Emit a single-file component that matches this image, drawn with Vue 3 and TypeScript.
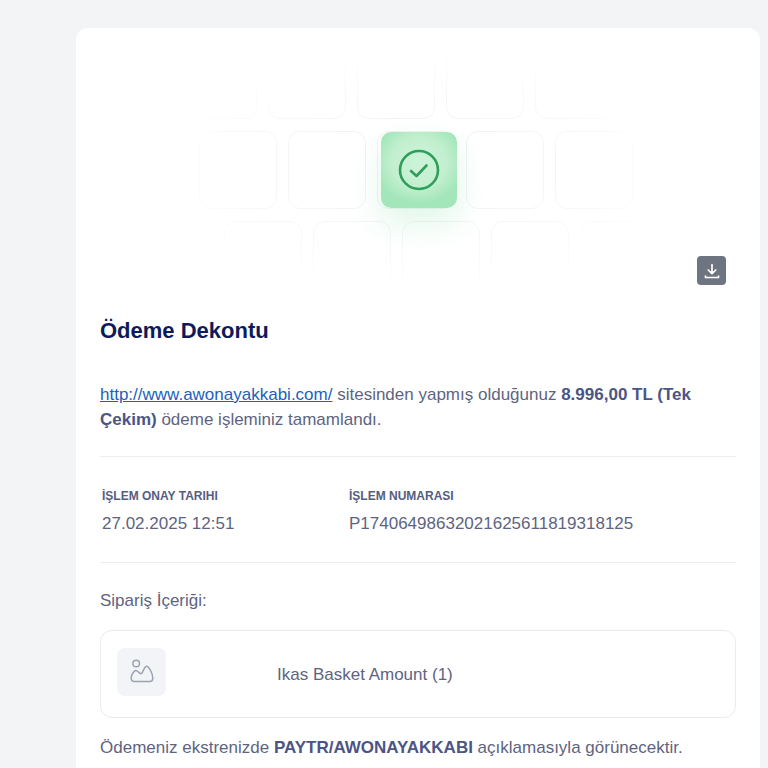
<script setup lang="ts">
interface GridRow { id: string; offset: number; cells: number[] }

const rows: GridRow[] = [
  { id: 'top', offset: 103, cells: [0, 1, 2, 3, 4] },
  { id: 'middle', offset: 123, cells: [0, 1, 2, 3, 4] },
  { id: 'bottom', offset: 148, cells: [0, 1, 2, 3, 4] },
]
</script>

<template>
  <main class="page">
    <section class="card">
      <div class="hero">
        <div class="tiles" aria-hidden="true">
          <div v-for="row in rows" :key="row.id" class="tile-row" :style="{ paddingLeft: row.offset + 'px' }">
            <span v-for="cell in row.cells" :key="cell" class="tile" />
          </div>
        </div>
        <div class="success">
          <svg width="44" height="44" viewBox="0 0 44 44" fill="none">
            <circle cx="22" cy="22" r="19" stroke="#2f9e5b" stroke-width="2.6" />
            <path d="M14 23l5.500 5 10-10.500" stroke="#2f9e5b" stroke-width="2.6" stroke-linecap="round" stroke-linejoin="round" />
          </svg>
        </div>
        <button class="download" type="button" aria-label="İndir">
          <svg width="18" height="18" viewBox="0 0 18 18" fill="none">
            <path d="M9 2.500v9M5.200 8 9 11.700 12.800 8M2.500 14v1.500h13V14" stroke="#fff" stroke-width="1.700" stroke-linecap="round" stroke-linejoin="round" />
          </svg>
        </button>
      </div>

      <h1 class="title">Ödeme Dekontu</h1>

      <p class="intro">
        <a href="#" class="link">http://www.awonayakkabi.com/</a> sitesinden yapmış olduğunuz
        <strong>8.996,00 TL (Tek Çekim)</strong> ödeme işleminiz tamamlandı.
      </p>

      <div class="meta">
        <div class="meta-item date">
          <div class="label">İşlem Onay Tarihi</div>
          <div class="value">27.02.2025 12:51</div>
        </div>
        <div class="meta-item">
          <div class="label">İşlem Numarası</div>
          <div class="value">P17406498632021625611819318125</div>
        </div>
      </div>

      <h2 class="section-title">Sipariş İçeriği:</h2>

      <div class="order">
        <div class="thumb">
          <svg width="26" height="26" viewBox="0 0 26 26" fill="none">
            <circle cx="7.200" cy="4.500" r="3.300" stroke="#9ca3af" stroke-width="1.500" />
            <path d="M2.200 19c0-2.500 2-6.500 4.300-7.500 2-.8 3.500 3.300 5.500 3.300 2 0 3-7.600 5.500-7.600 2.500 0 6.300 7.500 6.300 12 0 2-1.300 3.300-3 3.300H5c-1.700 0-2.800-1.500-2.800-3.500z" stroke="#9ca3af" stroke-width="1.500" stroke-linejoin="round" />
          </svg>
        </div>
        <span class="order-name">Ikas Basket Amount (1)</span>
      </div>

      <p class="note">
        Ödemeniz ekstrenizde <strong>PAYTR/AWONAYAKKABI</strong> açıklamasıyla görünecektir.
      </p>
    </section>
  </main>
</template>

<style>
html,
body {
  margin: 0;
  height: 768px;
  overflow: hidden;
  background: #f3f4f6;
}
</style>

<style scoped>
.page {
  padding: 28px 8px 0 76px;
  font-family: "Liberation Sans", Arial, sans-serif;
  color: #5e6480;
  font-size: 17px;
}

.card {
  background: #fff;
  border-radius: 12px 12px 0 0;
  padding: 0 24px 40px;
  min-height: 780px;
  box-sizing: border-box;
}

.hero {
  position: relative;
  height: 272px;
  margin: 0 -24px;
  overflow: hidden;
}

.tiles {
  position: absolute;
  inset: 0;
  display: flex;
  flex-direction: column;
  gap: 12px;
  padding-top: 13px;
  -webkit-mask-image: radial-gradient(ellipse 270px 125px at 343px 142px, #000 35%, transparent 100%);
  mask-image: radial-gradient(ellipse 270px 125px at 343px 142px, #000 35%, transparent 100%);
}

.tile-row {
  display: flex;
  gap: 11px;
}

.tile {
  flex: none;
  width: 76px;
  height: 76px;
  border: 1px solid #f1f2f5;
  border-radius: 12px;
}

.success {
  position: absolute;
  left: 305px;
  top: 104px;
  width: 76px;
  height: 76px;
  display: flex;
  align-items: center;
  justify-content: center;
  border-radius: 10px;
  background: radial-gradient(ellipse 60% 55% at 50% 40%, #cdf4d9 0%, #c2efcf 60%, #a2e6b9 100%);
  box-shadow: 0 16px 32px rgba(120, 220, 160, 0.22);
}

.download {
  position: absolute;
  right: 34px;
  top: 228px;
  width: 29px;
  height: 29px;
  padding: 0;
  display: flex;
  align-items: center;
  justify-content: center;
  border: 0;
  border-radius: 4px;
  background: #6f7580;
}

.title {
  margin: 20px 0 0;
  font-size: 22px;
  line-height: 22px;
  font-weight: 700;
  color: #0d1a5c;
}

.intro {
  margin: 40px 0 0;
  line-height: 25px;
  padding-bottom: 24px;
  border-bottom: 1px solid #eceef1;
}

.link {
  color: #1d5fbf;
}

strong {
  font-weight: 700;
  color: #4b5585;
}

.meta {
  display: flex;
  padding: 32px 2px 26px;
  border-bottom: 1px solid #eceef1;
}

.meta-item.date {
  width: 247px;
}

.label {
  font-size: 12px;
  line-height: 14px;
  font-weight: 700;
  text-transform: uppercase;
  color: #565d7f;
}

.value {
  margin-top: 9px;
  line-height: 24px;
}

.section-title {
  margin: 26px 0 0;
  font-size: 17px;
  font-weight: 400;
  line-height: 24px;
}

.order {
  display: flex;
  align-items: center;
  height: 88px;
  box-sizing: border-box;
  margin-top: 17px;
  padding: 0 16px;
  border: 1px solid #e9ebef;
  border-radius: 12px;
}

.thumb {
  width: 49px;
  height: 48px;
  margin-top: -5px;
  display: flex;
  align-items: center;
  justify-content: center;
  border-radius: 8px;
  background: #f3f4f8;
}

.order-name {
  margin-left: 111px;
  padding-top: 2px;
}

.note {
  margin: 18px 0 0;
  line-height: 24px;
}
</style>
